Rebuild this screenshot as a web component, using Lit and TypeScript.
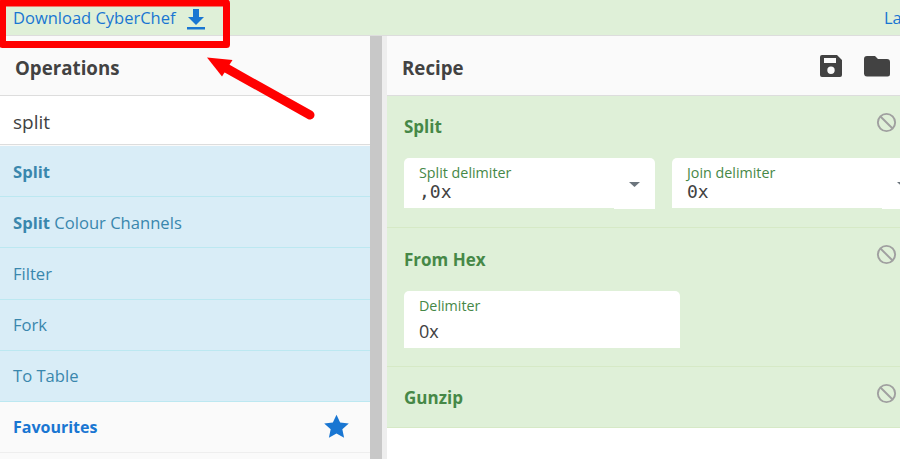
import { LitElement, html, css, svg } from 'lit';
import { customElement } from 'lit/decorators.js';

const banIcon = html`<svg class="ban" viewBox="0 0 24 24" width="23" height="23">
  <circle cx="12" cy="12" r="9" fill="none" stroke="currentColor" stroke-width="2"></circle>
  <path d="M5.7 5.7 18.3 18.3" stroke="currentColor" stroke-width="2"></path>
</svg>`;

const caret = svg`<svg class="caret" viewBox="0 0 11 5" width="11" height="5"><path d="M0 0h11L5.5 5z" fill="#6c757d"></path></svg>`;

@customElement('app-root')
export class AppRoot extends LitElement {
  static styles = css`
    :host {
      display: block;
      position: relative;
      width: 900px;
      height: 459px;
      overflow: hidden;
      background: #fff;
      font-family: 'Open Sans', 'Noto Sans', sans-serif;
      color: #424242;
    }
    .banner {
      display: flex;
      align-items: center;
      height: 35px;
      padding: 0 0 0 13px;
      background: #dff0d8;
      border-bottom: 1px solid #dddddd;
      color: #1976d2;
      font-size: 16.500px;
      white-space: nowrap;
    }
    .banner svg {
      margin: 4px 0 0 11px;
    }
    .build {
      margin-left: auto;
      width: 16px;
    }
    .main {
      display: flex;
      height: 423px;
    }
    .left {
      width: 370px;
      display: flex;
      flex-direction: column;
      background: #fafafa;
    }
    .title {
      display: flex;
      align-items: center;
      justify-content: space-between;
      flex: none;
      height: 59px;
      background: #fafafa;
      border-bottom: 1px solid #dddddd;
      font-size: 18.700px;
      font-weight: 700;
    }
    .title > span {
      padding-top: 4px;
    }
    .left .title {
      padding-left: 15px;
    }
    .search {
      height: 49px;
      flex: none;
      display: flex;
      align-items: center;
      padding: 4px 0 0 13px;
      box-sizing: border-box;
      background: #fff;
      border-bottom: 1px solid #dddddd;
      font-size: 19px;
    }
    .ops {
      margin-top: 1px;
      background: #d9edf7;
      color: #3a87ad;
      font-size: 16.600px;
    }
    .op {
      display: flex;
      align-items: center;
      height: 50.200px;
      padding-left: 13px;
      border-bottom: 1px solid #bce8f1;
      white-space: pre;
    }
    .op b {
      font-weight: 700;
    }
    .fav {
      display: flex;
      align-items: center;
      justify-content: space-between;
      flex: none;
      height: 50px;
      padding: 0 21px 0 13px;
      border-bottom: 1px solid #eeeeee;
      color: #1976d2;
      font-size: 16px;
      font-weight: 700;
    }
    .gutter {
      width: 12px;
      background: #c8c8c8;
    }
    .gutter2 {
      width: 5px;
      background: #eeeeee;
    }
    .recipe {
      flex: 1;
      min-width: 0;
      display: flex;
      flex-direction: column;
    }
    .recipe .title {
      padding-left: 15px;
      padding-right: 10px;
    }
    .tools {
      display: flex;
      align-items: center;
      gap: 21px;
    }
    .step {
      position: relative;
      flex: none;
      box-sizing: border-box;
      padding: 0 17px;
      background: #dff0d8;
      border-bottom: 1px solid #d6e9c6;
      color: #468847;
    }
    .step h3 {
      margin: 0;
      font-size: 17px;
      font-weight: 700;
    }
    .step .ban {
      position: absolute;
      top: 15px;
      right: 2px;
      color: #a0a0a0;
    }
    .s1 {
      height: 132px;
      padding-top: 19px;
    }
    .s2 {
      height: 139px;
      padding-top: 20px;
    }
    .s3 {
      height: 61px;
      padding-top: 19px;
    }
    .fields {
      display: flex;
      gap: 17px;
      width: 600px;
      margin-top: 20px;
    }
    .field {
      position: relative;
      flex: none;
      box-sizing: border-box;
      width: 251px;
      height: 50px;
      padding: 7px 15px 0;
      background: #fff;
      border-radius: 5px 5px 0 0;
      font-size: 14.300px;
      line-height: 16px;
    }
    .field.tall {
      width: 276px;
      height: 57px;
    }
    .field::after {
      content: '';
      position: absolute;
      right: 0;
      bottom: -1px;
      width: 41px;
      height: 1px;
      background: #fff;
    }
    .field.tall::after {
      display: none;
    }
    .value {
      margin-top: 1px;
      font-family: 'DejaVu Sans Mono', monospace;
      font-size: 18px;
      line-height: 20px;
      color: #424242;
    }
    .tall .value {
      margin-top: 7px;
      font-family: 'Open Sans', sans-serif;
    }
    .caret {
      position: absolute;
      right: 15px;
      top: 24px;
    }
    .overlay {
      position: absolute;
      left: 0;
      top: 0;
      pointer-events: none;
    }
  `;

  render() {
    return html`
      <div class="banner">
        <span>Download CyberChef</span>
        <svg viewBox="0 0 18 21" width="18" height="21">
          <path d="M6 0h6v8h5l-8 8-8-8h5zM0 18h18v2.500H0z" fill="#1976d2"></path>
        </svg>
        <span class="build">La</span>
      </div>
      <div class="main">
        <div class="left">
          <div class="title"><span>Operations</span></div>
          <div class="search">split</div>
          <div class="ops">
            <div class="op"><b>Split</b></div>
            <div class="op"><b>Split</b> Colour Channels</div>
            <div class="op">Filter</div>
            <div class="op">Fork</div>
            <div class="op">To Table</div>
          </div>
          <div class="fav">
            <span>Favourites</span>
            <svg viewBox="0 0 24 24" width="25" height="25">
              <path d="M12 .6l3.500 7.600 8.300.9-6.200 5.600 1.700 8.200L12 18.800l-7.300 4.100 1.700-8.200L.2 9.100l8.300-.9z" fill="#1976d2"></path>
            </svg>
          </div>
        </div>
        <div class="gutter"></div>
        <div class="gutter2"></div>
        <div class="recipe">
          <div class="title">
            <span>Recipe</span>
            <div class="tools">
              <svg viewBox="0 0 24 24" width="24" height="24">
                <path fill="#424242" fill-rule="evenodd" d="M3 1h15l5 5v15a2 2 0 0 1-2 2H3a2 2 0 0 1-2-2V3a2 2 0 0 1 2-2zM5 4v5h12V4zM12 12.500a3.700 3.700 0 1 0 0 7.400 3.700 3.700 0 0 0 0-7.400z"></path>
              </svg>
              <svg viewBox="0 0 26 22" width="26" height="22">
                <path fill="#424242" d="M3 1h8l3 3h9a3 3 0 0 1 3 3v12a2.500 2.500 0 0 1-2.500 2.500h-20.500A3 3 0 0 1 0 19V4a3 3 0 0 1 3-3z"></path>
              </svg>
            </div>
          </div>
          <div class="step s1">
            <h3>Split</h3>
            ${banIcon}
            <div class="fields">
              <div class="field">Split delimiter<div class="value">,0x</div>${caret}</div>
              <div class="field">Join delimiter<div class="value">0x</div>${caret}</div>
            </div>
          </div>
          <div class="step s2">
            <h3>From Hex</h3>
            ${banIcon}
            <div class="fields">
              <div class="field tall">Delimiter<div class="value">0x</div></div>
            </div>
          </div>
          <div class="step s3">
            <h3>Gunzip</h3>
            ${banIcon}
          </div>
        </div>
      </div>
      <svg class="overlay" width="900" height="459" viewBox="0 0 900 459">
        <path d="M2.500 3H226.500V44.500H2.500Z" fill="none" stroke="#ff0000" stroke-width="7" stroke-linejoin="round"></path>
        <path d="M310 115 226 68" fill="none" stroke="#ff0000" stroke-width="9" stroke-linecap="round"></path>
        <path d="M207 57.500 232.500 60 222 76.500Z" fill="#ff0000"></path>
      </svg>
    `;
  }
}
